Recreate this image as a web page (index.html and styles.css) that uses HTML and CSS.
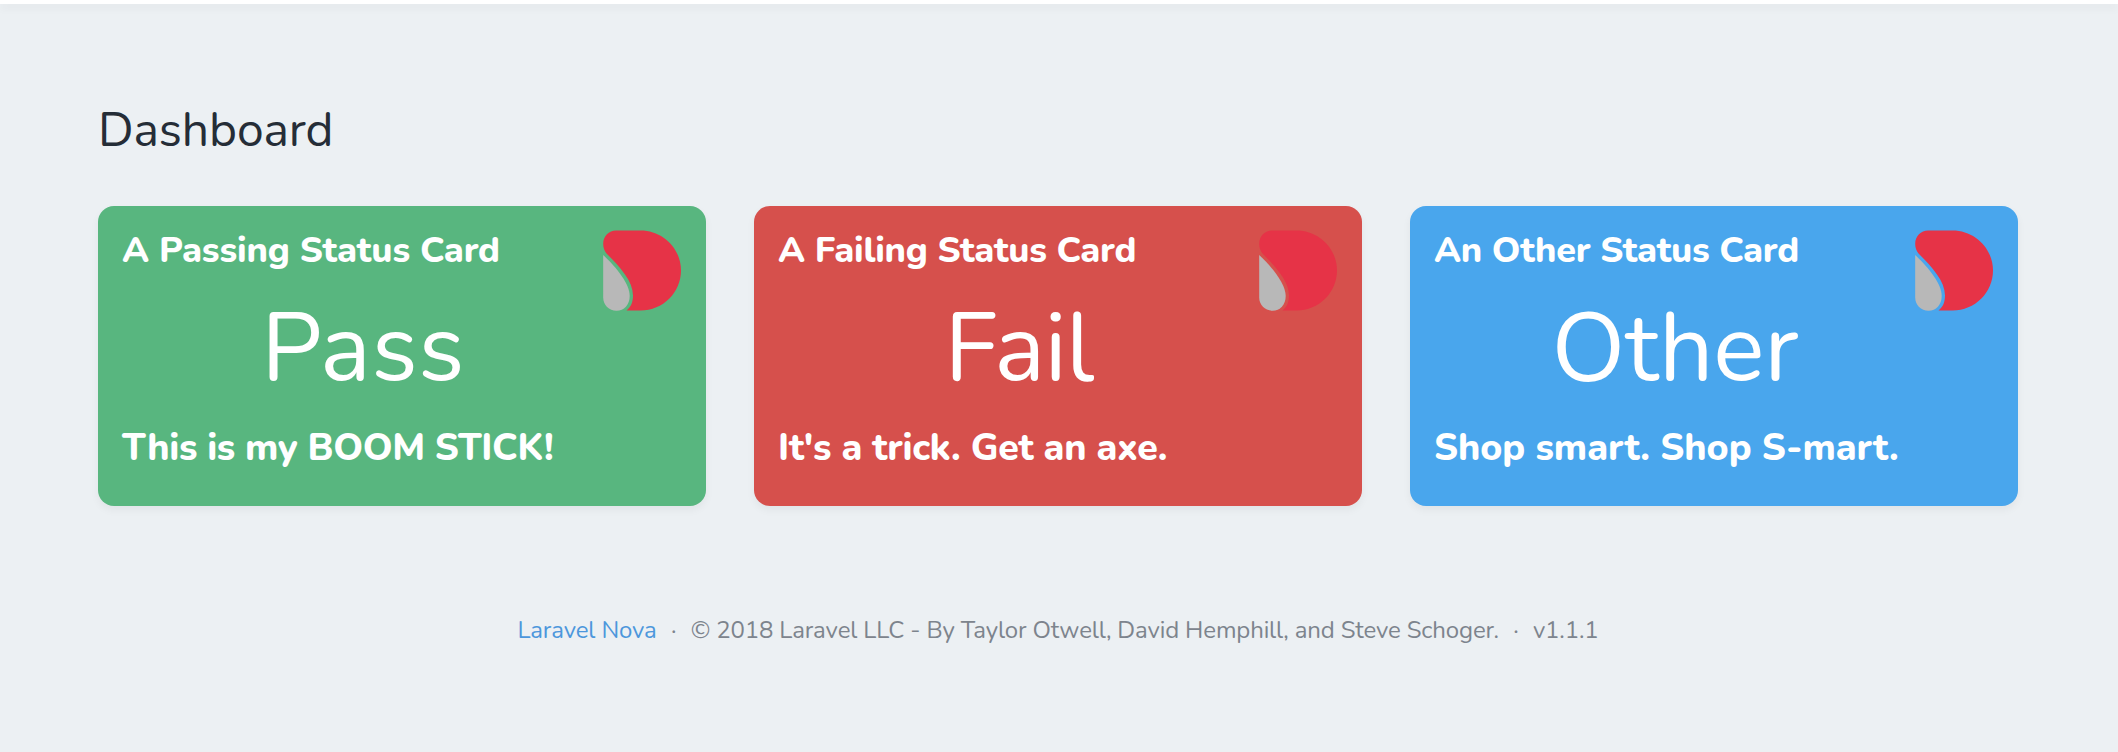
FILE: index.html
```html
<!DOCTYPE html>
<html lang="en">
<head>
<meta charset="utf-8">
<title>Dashboard</title>
<link rel="stylesheet" href="styles.css">
</head>
<body>
<svg class="defs" aria-hidden="true">
  <symbol id="logo" viewBox="0 0 78 81">
    <path fill="#e63347" d="M13 .5H37.500C60 .5 78 18.500 78 40.500S60 80.500 37.500 80.500H23.500C28 77 30 72 30 65.500C30 51 17 37 3.500 23.500C1.500 21 .2 18 .2 14C.2 6 6 .5 13 .5Z"/>
    <path fill="#b8b8b8" d="M.2 25V67.500C.2 75 6 80.700 13.500 80.700S26.700 75 26.700 66C26.700 54 14 38 .2 25Z"/>
  </symbol>
</svg>
<header class="topbar"></header>
<main class="content">
  <h1 class="heading">Dashboard</h1>
  <div class="cards">
    <section class="card pass">
      <div class="body">
        <h2 class="title">A Passing Status Card</h2>
        <p class="status">Pass</p>
        <p class="note">This is my BOOM STICK!</p>
      </div>
      <svg class="logo"><use href="#logo"/></svg>
    </section>
    <section class="card fail">
      <div class="body">
        <h2 class="title">A Failing Status Card</h2>
        <p class="status">Fail</p>
        <p class="note">It's a trick. Get an axe.</p>
      </div>
      <svg class="logo"><use href="#logo"/></svg>
    </section>
    <section class="card other">
      <div class="body">
        <h2 class="title">An Other Status Card</h2>
        <p class="status">Other</p>
        <p class="note">Shop smart. Shop S-mart.</p>
      </div>
      <svg class="logo"><use href="#logo"/></svg>
    </section>
  </div>
  <footer class="footer">
    <a class="link">Laravel Nova</a>
    <span class="dot">·</span>
    <span class="copyright">© 2018 Laravel LLC - By Taylor Otwell, David Hemphill, and Steve Schoger.</span>
    <span class="dot">·</span>
    <span class="version">v1.1.1</span>
  </footer>
</main>
</body>
</html>
```
FILE: styles.css
```css
* { box-sizing: border-box; }
body {
  margin: 0;
  min-height: 752px;
  background: #ecf0f3;
  color: #252d37;
  font-family: Nunito, Lato, sans-serif;
  font-weight: 370;
}
h1, h2, p { margin: 0; font-weight: 370; }
.defs { display: block; width: 0; height: 0; }
.topbar { height: 4px; background: #fff; box-shadow: 0 4px 8px rgba(0, 0, 0, .06); }
.content { padding: 96px 100px 0 98px; }
.heading { height: 106px; font-size: 48px; line-height: 60px; letter-spacing: -.1px; }
.cards { display: grid; grid-template-columns: repeat(3, 608px); gap: 48px; }
.card {
  display: flex;
  height: 300px;
  padding: 24px;
  border-radius: 16px;
  color: #fff;
  white-space: nowrap;
  box-shadow: 0 4px 8px rgba(0, 0, 0, .05);
}
.pass { background: #58b67f; }
.fail { background: #d6504c; }
.other { background: #49a6ed; }
.body { width: 482px; }
.logo { width: 78px; height: 81px; flex: none; margin-left: -1px; }
.title { height: 42px; font-size: 36px; line-height: 42px; font-weight: 800; letter-spacing: -.12px; }
.status { height: 152px; font-size: 96px; line-height: 153px; text-align: center; }
.note { height: 48px; font-size: 37.5px; line-height: 48px; font-weight: 800; }
.pass .status { letter-spacing: .5px; }
.pass .note { letter-spacing: -.36px; }
.fail .title { letter-spacing: -.25px; }
.fail .status { letter-spacing: -.8px; }
.fail .note { letter-spacing: -.26px; }
.other .title { letter-spacing: -.25px; }
.other .status { letter-spacing: -.2px; }
.other .note { letter-spacing: -.06px; }
.footer {
  display: flex;
  justify-content: center;
  margin-top: 108px;
  font-size: 24px;
  line-height: 32px;
  color: #7d848d;
  white-space: nowrap;
  letter-spacing: -.13px;
}
.link { color: #4c97dc; }
.dot { width: 34px; text-align: center; }
```
